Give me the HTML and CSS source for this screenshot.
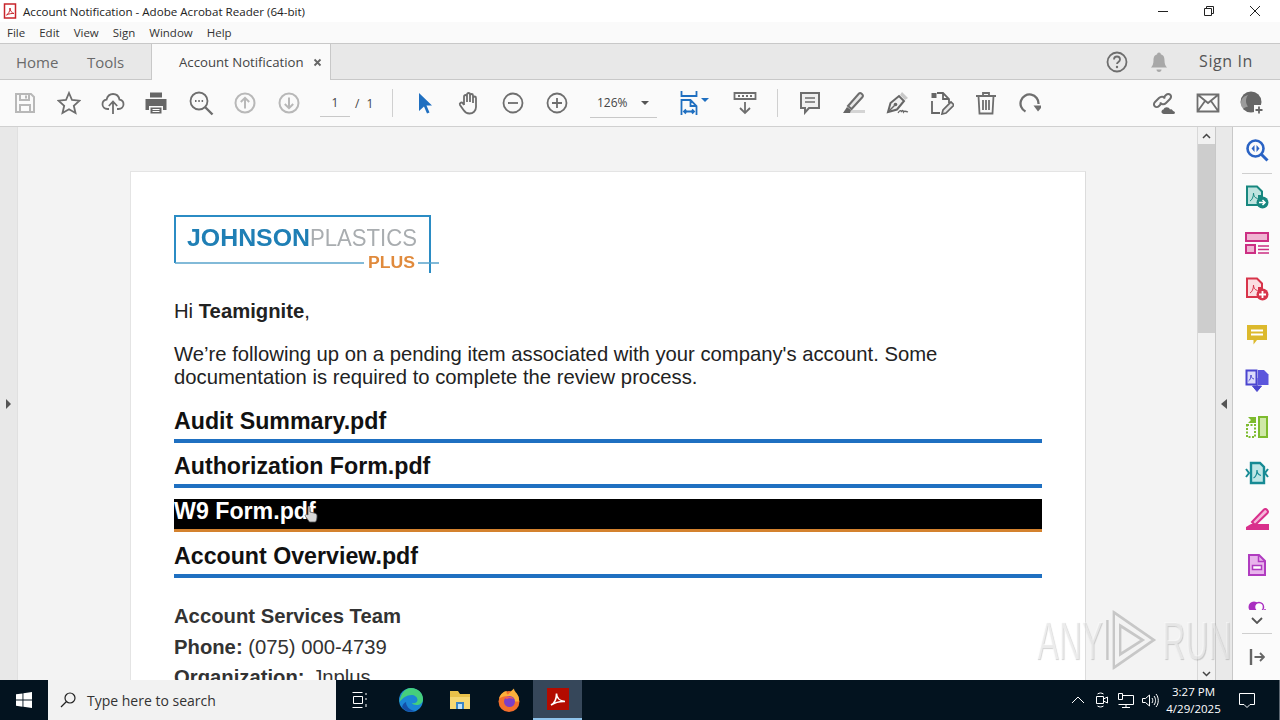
FILE: index.html
```html
<!DOCTYPE html>
<html>

<head>
    <meta charset="utf-8">
    <title>Account Notification - Adobe Acrobat Reader (64-bit)</title>
    <link rel="stylesheet" href="styles.css">
</head>

<body>
    <div class="title-bar">
        <svg class="app-icon" width="14" height="16" viewBox="0 0 14 16"><path d="M1.500 1h11v14h-11z" fill="#fff" stroke="#c8242b" stroke-width="1.500"/><path d="M3.500 12c2-1 3.500-4 3.500-7 0 3 2 5 4 5.500-2.500-.2-5 .3-7.500 1.500z" fill="none" stroke="#c8242b"/></svg>
        <span class="title-text">Account Notification - Adobe Acrobat Reader (64-bit)</span>
        <div class="win-buttons">
            <svg width="12" height="12" viewBox="0 0 12 12"><path d="M1 6.500h10" stroke="#222"/></svg>
            <svg width="12" height="12" viewBox="0 0 12 12"><path d="M1.500 3.500h7v7h-7zM3.500 3.500v-2h7v7h-2" fill="none" stroke="#222"/></svg>
            <svg width="12" height="12" viewBox="0 0 12 12"><path d="M1 1l10 10M11 1l-10 10" stroke="#222"/></svg>
        </div>
    </div>

    <div class="menu-bar">
        <span>File</span><span>Edit</span><span>View</span><span>Sign</span><span>Window</span><span>Help</span>
    </div>

    <div class="tab-bar">
        <span class="nav-tab nav-home">Home</span>
        <span class="nav-tab nav-tools">Tools</span>
        <div class="doc-tab">
            <span>Account Notification</span>
            <svg width="9" height="9" viewBox="0 0 9 9"><path d="M1.500 1.500l6 6M7.500 1.500l-6 6" stroke="#666" stroke-width="1.800"/></svg>
        </div>
        <div class="tab-right">
            <svg width="22" height="22" viewBox="0 0 22 22"><circle cx="11" cy="11" r="9.500" fill="none" stroke="#6e6e6e" stroke-width="1.800"/><path d="M8 8.500c0-4 6-4 6 0 0 2.500-3 2.300-3 4.500" fill="none" stroke="#6e6e6e" stroke-width="1.800"/><circle cx="11" cy="16" r="1.200" fill="#6e6e6e"/></svg>
            <svg class="bell" width="20" height="22" viewBox="0 0 20 22"><path d="M10 1.500c1.200 0 1.800.8 1.800 1.800 3 .8 3.700 3.400 3.700 6.200 0 3.500 1 5.500 2.500 7H2c1.500-1.500 2.500-3.500 2.500-7 0-2.800.7-5.400 3.700-6.200 0-1 .6-1.800 1.800-1.800z" fill="#a8a8a8"/><path d="M7.500 18.500h5c0 1.500-1 2.500-2.500 2.500s-2.500-1-2.500-2.500z" fill="#a8a8a8"/></svg>
            <span class="sign-in">Sign In</span>
        </div>
    </div>

    <div class="toolbar">
        <span class="tool"><svg width="22" height="22" viewBox="0 0 22 22" class="ln pale"><path d="M2 2h15l3 3v15H2zM6 2v6h9V2M12 3.500v3M6 20v-7h10v7"/></svg></span>
        <span class="tool"><svg width="24" height="24" viewBox="0 0 24 24" class="ln"><path d="M12 2l3 7 7.500.7-5.700 5 1.700 7.300-6.500-3.800L5.500 22l1.700-7.300-5.700-5L9 9z"/></svg></span>
        <span class="tool"><svg width="24" height="24" viewBox="0 0 24 24" class="ln"><path d="M8 18H6.500C3.500 18 1.500 16 1.500 13.300c0-2.500 1.800-4.300 4-4.600C6.500 5 9 3 12 3s5.800 2.200 6.500 5.700c2.300.3 4 2.100 4 4.600 0 2.700-2 4.700-5 4.700H16M12 23V11M7.800 15l4.200-4.500 4.200 4.500"/></svg></span>
        <span class="tool tool-print"><svg width="24" height="24" viewBox="0 0 24 24"><path d="M6 1.500h12v5H6zM1.500 8h21v11H19v-4H5v4H1.500zM6.500 16.500h11v6h-11z" fill="#666"/><path d="M8.500 18.500h7M8.500 20.500h7" stroke="#fff"/></svg></span>
        <span class="tool"><svg width="26" height="26" viewBox="0 0 26 26" class="ln"><circle cx="11" cy="11" r="8.500"/><path d="M17 17l7.500 7.500" stroke-width="2.400"/><path d="M7 11h1.500M10.300 11h1.500M13.600 11h1.500"/></svg></span>
        <span class="tool"><svg width="22" height="22" viewBox="0 0 22 22" class="ln pale"><circle cx="11" cy="11" r="9.500"/><path d="M11 16.500V6M6.800 10L11 5.800l4.200 4.200"/></svg></span>
        <span class="tool"><svg width="22" height="22" viewBox="0 0 22 22" class="ln pale"><circle cx="11" cy="11" r="9.500"/><path d="M11 5.500V16M6.800 12l4.200 4.200 4.200-4.200"/></svg></span>
        <div class="page-num"><span class="page-input">1</span><span class="page-total">/ 1</span></div>
        <span class="tool-sep sep-first"></span>
        <span class="tool"><svg width="16" height="22" viewBox="0 0 16 22"><path d="M2 1l13 12.500H9.500l3 7-2.500 1-3-7L2 19z" fill="#1f6fc0"/></svg></span>
        <span class="tool"><svg width="24" height="24" viewBox="0 0 24 24" class="ln"><path d="M7 14V5.500c0-2 3-2 3 0V11M10 10V3.500c0-2 3-2 3 0V11M13 10.500V4.500c0-2 3-2 3 0V12M16 11V7c0-2 3-2 3 0v9c0 4-3 6.500-6.500 6.500-3 0-4.500-1.200-6-3.500L3 14c-1-1.800 1.500-3.300 2.800-1.800L7 14"/></svg></span>
        <span class="tool"><svg width="22" height="22" viewBox="0 0 22 22" class="ln"><circle cx="11" cy="11" r="9.500"/><path d="M6 11h10"/></svg></span>
        <span class="tool"><svg width="22" height="22" viewBox="0 0 22 22" class="ln"><circle cx="11" cy="11" r="9.500"/><path d="M6 11h10M11 6v10"/></svg></span>
        <div class="zoom-box"><span>126%</span><i class="caret"></i></div>
        <span class="tool tool-fit"><svg width="18" height="25" viewBox="0 0 18 25" fill="none" stroke="#1f6fc0" stroke-width="1.800"><path d="M1.500 0v5h15V0M1.500 24V9h9l6 6v9M10.500 9v6h6M4 20.500h10M6 18.500l-2 2 2 2M12 18.500l2 2-2 2"/></svg><i class="caret blue"></i></span>
        <span class="tool"><svg width="24" height="24" viewBox="0 0 24 24" class="ln"><path d="M1.500 2h21v6h-21z"/><path d="M5 5h2M9 5h2M13 5h2M17 5h2" stroke-width="2"/><path d="M12 11v11M7 17l5 5 5-5"/></svg></span>
        <span class="tool-sep sep-second"></span>
        <span class="tool"><svg width="22" height="24" viewBox="0 0 22 24"><path d="M2 2h18v15H10l-4 4.500V17H2z" fill="#f0f0f0" stroke="#6e6e6e" stroke-width="2"/><path d="M6 7h10M6 11h10" stroke="#6e6e6e" stroke-width="1.500"/></svg></span>
        <span class="tool"><svg width="24" height="24" viewBox="0 0 24 24"><path d="M7 22h16v-3H9z" fill="#d4d4d4"/><path d="M1 22h7l1-3-4-3z" fill="#666"/><path d="M6 15L17 2.500c1.500-1.500 5 1.500 3.500 3.500L9.500 18z" fill="#e8e8e8" stroke="#6e6e6e" stroke-width="2"/></svg></span>
        <span class="tool"><svg width="24" height="24" viewBox="0 0 24 24"><path d="M2 21l2.500-9L13 5l5 5-7 8.500z" fill="#f0f0f0" stroke="#666" stroke-width="2"/><path d="M2.500 20.500l6-6" stroke="#666" stroke-width="1.500"/><circle cx="9.500" cy="13.500" r="1.800" fill="#666"/><path d="M14 4l2-3 6 6-3 2z" fill="#c8c8c8"/><path d="M12 22c2-3 3-3 3.500-1 .5-2 1.500-2 2 0 .5-1 2-1 4.500 0" fill="none" stroke="#666" stroke-width="1.300"/></svg></span>
        <span class="tool"><svg width="24" height="24" viewBox="0 0 24 24"><path d="M1.500 2h5v5h-5z" fill="#666"/><path d="M7 2h6l6 6v4M13 2v6h6M2 10v12h8" fill="none" stroke="#666" stroke-width="1.800"/><path d="M12 23l1-4 8-8 3 3-8 8z" fill="#e8e8e8" stroke="#666" stroke-width="1.700"/></svg></span>
        <span class="tool"><svg width="22" height="24" viewBox="0 0 22 24" class="ln"><path d="M1 5h20M8 5V2h6v3M3.500 5l1 17.500h13L18.500 5M8 9v10M11 9v10M14 9v10"/></svg></span>
        <span class="tool"><svg width="22" height="22" viewBox="0 0 22 22"><path d="M6.500 19.500A9 9 0 1 1 19.500 12" fill="none" stroke="#6e6e6e" stroke-width="2.300"/><path d="M14.500 13.500h9.500L19 19.500z" fill="#6e6e6e"/></svg></span>
        <span class="tool tool-push"><svg width="26" height="24" viewBox="0 0 26 24"><path d="M9 14l-3 3c-3 3-7-1-4-4l4-4c2-2 5-1.500 6 .5M10 9l3-3c3-3 7 1 4 4l-4 4c-2 2-5 1.500-6-.5" fill="none" stroke="#6e6e6e" stroke-width="2" transform="translate(2 -2)"/><path d="M13 23c-3 0-3.500-4-.5-4.500 1-3 5.500-3 6.500 0 1-.5 2.500 0 3 1.500 2 0 3 3 .5 3z" fill="#666"/></svg></span>
        <span class="tool"><svg width="24" height="20" viewBox="0 0 24 20" class="ln"><path d="M1.500 1.500h21v17h-21zM1.500 1.500L12 10l10.500-8.500M1.500 18.500L9 8M22.500 18.500L15 8"/></svg></span>
        <span class="tool"><svg width="24" height="24" viewBox="0 0 24 24"><circle cx="11" cy="11" r="10.500" fill="#666"/><path d="M2 19c2-2.500 4-3 6-3.500-1-1-2-3-2-5.500 0-2 .5-4 2-6-4 1-7 3.500-7 8 0 2.500.3 5 1 7z" fill="#fff" opacity=".35"/><path d="M14 14h10v10H14z" fill="#fafafa"/><path d="M19 15.500v7M15.500 19h7" stroke="#666" stroke-width="1.800"/></svg></span>
    </div>

    <div class="workspace">
        <div class="left-strip"><i class="arrow-right"></i></div>

        <div class="doc-area">
            <div class="page">
                <svg class="logo" width="266" height="60" viewBox="0 0 266 60">
                    <path d="M1 48V1h255v57" fill="none" stroke="#2b8cc4" stroke-width="2"/>
                    <path d="M1 48h189M244 48h21" stroke="#5aa4cc" stroke-width="1.500"/>
                    <text x="13" y="31" class="logo-a" textLength="123" lengthAdjust="spacingAndGlyphs">JOHNSON</text>
                    <text x="136" y="31" class="logo-b" textLength="107" lengthAdjust="spacingAndGlyphs">PLASTICS</text>
                    <text x="194" y="53" class="logo-c" textLength="47" lengthAdjust="spacingAndGlyphs">PLUS</text>
                </svg>
                <p class="greeting">Hi <b>Teamignite</b>,</p>
                <p class="intro">We’re following up on a pending item associated with your company's account. Some documentation is required to complete the review process.</p>
                <div class="file-row">Audit Summary.pdf</div>
                <div class="file-row">Authorization Form.pdf</div>
                <div class="file-row file-hover">W9 Form.pdf</div>
                <div class="file-row">Account Overview.pdf</div>
                <div class="contact">
                    <div><b>Account Services Team</b></div>
                    <div><b>Phone:</b> (075) 000-4739</div>
                    <div><b class="org-label">Organization:</b> Jnplus</div>
                </div>
            </div>
            <svg class="cursor" width="14" height="18" viewBox="0 0 14 18"><path d="M4 9V2.500c0-1.500 2-1.500 2 0V7l5 1.200c1.500.4 2 1.200 2 2.800 0 3-.5 4.500-1.500 6H5.500L1.500 11.500C.5 10 2.500 8.500 4 10z" fill="#d8d8d8" stroke="#555" stroke-width=".8"/></svg>
        </div>

        <div class="scrollbar">
            <svg class="scroll-btn" width="9" height="6" viewBox="0 0 9 6"><path d="M1 5l3.500-3.500L8 5" fill="none" stroke="#444" stroke-width="1.500"/></svg>
            <div class="thumb"></div>
            <svg class="scroll-btn scroll-end" width="9" height="6" viewBox="0 0 9 6"><path d="M1 1l3.500 3.500L8 1" fill="none" stroke="#444" stroke-width="1.500"/></svg>
        </div>

        <div class="split-strip"><i class="arrow-left"></i></div>

        <div class="side-panel">
            <span class="side-item"><svg width="24" height="24" viewBox="0 0 24 24"><circle cx="10.500" cy="10.500" r="8" fill="none" stroke="#2a63c4" stroke-width="2.600"/><path d="M16.500 16.500l6 6" stroke="#2a63c4" stroke-width="3"/><path d="M9.500 7l-3 3.500 3 3.500zM11.500 7l3 3.500-3 3.500z" fill="#2a63c4"/></svg></span>
            <span class="side-line"></span>
            <span class="side-item"><svg width="24" height="24" viewBox="0 0 24 24"><path d="M2 1.500h10l5 5V11h-3v9H2z" fill="#bfe3df" stroke="#17877f" stroke-width="2"/><path d="M5 16c2-1 3.500-4 3.500-8 0 3 1.500 5 4 5.500" fill="none" stroke="#17877f"/><circle cx="17.500" cy="17.500" r="6" fill="#17877f"/><path d="M14 17.500h6M17.500 15l2.500 2.500-2.500 2.500" fill="none" stroke="#fff" stroke-width="1.500"/></svg></span>
            <span class="side-item"><svg width="24" height="22" viewBox="0 0 24 22"><path d="M1 1h22v8H1z" fill="#f0b4d2" stroke="#cc2f83" stroke-width="2"/><path d="M1 13h9v8H1z" fill="#f0b4d2" stroke="#cc2f83" stroke-width="2"/><path d="M13 14h11M13 17.500h11M13 21h11" stroke="#cc2f83" stroke-width="1.300"/></svg></span>
            <span class="side-item"><svg width="24" height="24" viewBox="0 0 24 24"><path d="M2 1.500h10l5 5V11h-3v9H2z" fill="#fbdfe2" stroke="#d8344a" stroke-width="2"/><path d="M5 16c2-1 3.500-4 3.500-8 0 3 1.500 5 4 5.500" fill="none" stroke="#d8344a"/><circle cx="17.500" cy="17.500" r="6" fill="#d8344a"/><path d="M14 17.500h7M17.500 14v7" stroke="#fff" stroke-width="1.800"/></svg></span>
            <span class="side-item"><svg width="22" height="22" viewBox="0 0 22 22"><path d="M1 1h20v15H11l-3.500 4.500V16H1z" fill="#dcb92c"/><path d="M5 6.500h12M5 10.500h12" stroke="#fff" stroke-width="1.800"/></svg></span>
            <span class="side-item"><svg width="24" height="24" viewBox="0 0 24 24"><path d="M1.500 1.500h10v14h-10z" fill="#dcdcfa" stroke="#4a45cf" stroke-width="2"/><path d="M13 1h6l4.500 4.500V16H13z" fill="#5b56dc"/><path d="M3.500 12c1.500-1 2.500-3 2.500-6 0 2 1 3.500 3 4" fill="none" stroke="#4a45cf"/><path d="M12 9v9M7.500 17h9L12 22.500z" fill="#4a45cf" stroke="#4a45cf"/></svg></span>
            <span class="side-item"><svg width="22" height="22" viewBox="0 0 22 22"><path d="M13 1h8v20h-8z" fill="#cfe8a8" stroke="#7dbb2e" stroke-width="2"/><path d="M1 9h8v12H1z" fill="none" stroke="#7dbb2e" stroke-width="2" stroke-dasharray="2 1.500"/><path d="M10 1H2l3 3-3 3h8z" fill="#7dbb2e"/></svg></span>
            <span class="side-item"><svg width="24" height="24" viewBox="0 0 24 24"><path d="M6 2h9l4 4v16H6z" fill="#bfe6e6" stroke="#168a94" stroke-width="2.400"/><path d="M8.500 17c2-1 3.500-4 3.500-8 0 3 1.500 5 4 5.500" fill="none" stroke="#168a94" stroke-width="1.200"/><path d="M1 8l3 4-3 4M23 8l-3 4 3 4" fill="none" stroke="#168a94" stroke-width="2"/></svg></span>
            <span class="side-item"><svg width="24" height="22" viewBox="0 0 24 22"><path d="M1 22v-3l5-3h18v6z" fill="#d92f8c"/><path d="M7 14L19 1.500c2-1.500 5 1.500 3.500 3.500L10 17z" fill="#f5b5d8" stroke="#d92f8c" stroke-width="2"/></svg></span>
            <span class="side-item"><svg width="18" height="22" viewBox="0 0 18 22"><path d="M1 1h10l6 6v14H1z" fill="#e8b4ec" stroke="#b03cc0" stroke-width="2"/><path d="M4.500 11.500h9v4h-9z" fill="#fff" stroke="#b03cc0" stroke-width="1.500"/><path d="M10.500 1v6.500H17" fill="none" stroke="#b03cc0" stroke-width="1.500"/></svg></span>
            <span class="side-clip"><svg width="20" height="14" viewBox="0 0 20 14"><circle cx="7" cy="8" r="5.500" fill="#a92fc0"/><circle cx="12" cy="8" r="4.500" fill="#fff" stroke="#a92fc0" stroke-width="1.500"/><circle cx="18" cy="11" r="1" fill="#a92fc0"/></svg></span>
            <span class="side-chev"><svg width="12" height="7" viewBox="0 0 12 7"><path d="M1 1l5 5 5-5" fill="none" stroke="#555" stroke-width="1.800"/></svg></span>
            <span class="side-line"></span>
            <span class="side-item side-last"><svg width="16" height="16" viewBox="0 0 16 16"><path d="M2 0v16" stroke="#666" stroke-width="2.400"/><path d="M5.500 8h9M11 4l4 4-4 4" fill="none" stroke="#666" stroke-width="1.800"/></svg></span>
        </div>

        <div class="watermark"><span>ANY</span><svg width="74" height="44" viewBox="0 0 74 62" preserveAspectRatio="none"><path d="M6 10v42M14 2l50 29-50 29zM22 16l28 15-28 15z" fill="none" stroke="#bdbdbd" stroke-width="3"/></svg><span>RUN</span></div>
    </div>

    <div class="taskbar">
        <span class="start"><svg width="16" height="16" viewBox="0 0 16 16"><path d="M0 2.300l6.500-.9v6.200H0zM7.400 1.300L16 0v7.600H7.400zM0 8.500h6.500v6.200L0 13.800zM7.400 8.500H16V16l-8.600-1.300z" fill="#fff"/></svg></span>
        <div class="search">
            <svg width="16" height="16" viewBox="0 0 16 16"><circle cx="10" cy="6" r="5" fill="none" stroke="#222" stroke-width="1.200"/><path d="M6.500 9.500L1 15" stroke="#222" stroke-width="1.300"/></svg>
            <span>Type here to search</span>
        </div>
        <span class="task task-first"><svg width="16" height="16" viewBox="0 0 16 16" fill="none" stroke="#fff"><path d="M.5 .5h10M.5 15.500h10M1.500 4.500h9v7h-9zM14 1v2M14 6v2M14 12v3" /></svg></span>
        <span class="task"><svg width="24" height="24" viewBox="0 0 24 24"><circle cx="12" cy="12" r="12" fill="#1b87d6"/><path d="M12 0c7 0 12 5 12 11 0 4-3 6-6.500 6-2.500 0-4-1-4.500-2 3 .5 5.500-.5 5.500-3 0-3-3-5-6-5-5 0-9 3-12 7C1.500 6 6 0 12 0z" fill="#45cf7d"/><path d="M7 14c0 4 3 8 9 9-2 1-9 2-13-4 1-3 2-4 4-5z" fill="#1450a8"/></svg></span>
        <span class="task"><svg width="22" height="20" viewBox="0 0 22 20"><path d="M1 1h8l2 3h10v15H1z" fill="#e9c14a"/><path d="M1 7h20v12H1z" fill="#f6d873"/><path d="M7 12h8v7H7z" fill="#3a86c8"/><path d="M9 14h4v5H9z" fill="#bfe0f5"/></svg></span>
        <span class="task"><svg width="24" height="24" viewBox="0 0 24 24"><circle cx="12" cy="13.500" r="10.500" fill="#f36f2c"/><path d="M2 11C3 6 7 3 10 3c-1 1.500-.5 3 1 3.500C13 4 15 2 17 .5c0 3 3 4 4.500 8 .5 2 .5 3 .5 5h-5C14 7 6 7 2 11z" fill="#fbb03b"/><circle cx="12.500" cy="13.500" r="5.500" fill="#7a3fc8"/><path d="M7 10c3-2 7-2 10 1-3-1-6-1-7 0z" fill="#f05a5a"/></svg></span>
        <span class="task task-active"><svg width="22" height="22" viewBox="0 0 22 22"><path d="M0 0h22v22H0z" fill="#b30b00"/><path d="M4 17c3-1.500 5.500-6 5.500-11.500C9.500 10 13 13 18 13.500c-4.500-.3-9.500.7-14 3.500z" fill="none" stroke="#fff" stroke-width="1.600"/></svg></span>
        <div class="tray">
            <span class="tray-icon"><svg width="14" height="8" viewBox="0 0 14 8"><path d="M1 7l6-6 6 6" fill="none" stroke="#fff"/></svg></span>
            <span class="tray-icon"><svg width="14" height="16" viewBox="0 0 14 16" fill="none" stroke="#fff"><path d="M1.500 4.500h7v7h-7zM8.500 7l4-2v6l-4-2M2.500 2c2-1.300 4-1.300 6 0M2.500 14c2 1.300 4 1.300 6 0"/></svg></span>
            <span class="tray-icon"><svg width="16" height="15" viewBox="0 0 16 15" fill="none" stroke="#fff"><path d="M4 2.500h11.500v9H.5M8 11.500v3M4 14.500h8M.5 .5h4v6h-4z"/></svg></span>
            <span class="tray-icon"><svg width="17" height="15" viewBox="0 0 17 15" fill="none" stroke="#fff"><path d="M.5 5.500h3L7.500 2v11l-4-3.500h-3zM10 5c1 1.500 1 3.500 0 5M12 3c2 2.500 2 6.500 0 9M14 1c3 3.500 3 9.500 0 13"/></svg></span>
            <div class="clock"><span>3:27 PM</span><span>4/29/2025</span></div>
            <span class="notify"><svg width="16" height="15" viewBox="0 0 16 15"><path d="M.5 .5h15v11h-4.500L8 14.500 5 11.500H.5z" fill="none" stroke="#fff"/></svg></span>
        </div>
    </div>
</body>

</html>
```
FILE: styles.css
```css
html,
body {
    margin: 0;
    height: 720px;
    overflow: hidden;
    background: #fff;
}

body {
    display: flex;
    flex-direction: column;
    font-family: "Open Sans", "Noto Sans", sans-serif;
    color: #222;
}

svg {
    display: block;
    flex: none;
}

.title-bar {
    height: 22px;
    display: flex;
    align-items: center;
    background: #fff;
    font-size: 11.600px;
}

.app-icon {
    margin: 0 6px 0 3px;
}

.win-buttons {
    margin-left: auto;
    display: flex;
    gap: 34px;
    padding-right: 19px;
}

.menu-bar {
    height: 21px;
    display: flex;
    align-items: center;
    gap: 14px;
    padding-left: 7px;
    background: #fafafa;
    font-size: 11.500px;
    color: #333;
}

.tab-bar {
    height: 37px;
    display: flex;
    align-items: stretch;
    background: #e8e8e8;
    border-top: 1px solid #c8c8c8;
    border-bottom: 1px solid #c8c8c8;
    box-sizing: border-box;
    color: #6a6a6a;
    font-size: 15px;
}

.nav-tab {
    display: flex;
    align-items: center;
}

.nav-home {
    margin-left: 16px;
    width: 71px;
}

.nav-tools {
    width: 64px;
}

.doc-tab {
    width: 180px;
    box-sizing: border-box;
    margin-bottom: -1px;
    padding: 0 8px 0 27px;
    display: flex;
    align-items: center;
    justify-content: space-between;
    background: #fafafa;
    border-left: 1px solid #c8c8c8;
    border-right: 1px solid #c8c8c8;
    color: #444;
    font-size: 13.200px;
}

.tab-right {
    margin-left: auto;
    display: flex;
    align-items: center;
    padding-right: 27px;
}

.bell {
    margin-left: 21px;
}

.sign-in {
    margin-left: 30px;
    margin-bottom: 2px;
    font-size: 16px;
    letter-spacing: .6px;
    color: #555;
}

.toolbar {
    height: 47px;
    box-sizing: border-box;
    display: flex;
    align-items: center;
    padding: 0 6px 0 3px;
    background: #fafafa;
    border-bottom: 1px solid #d0d0d0;
}

.ln {
    fill: none;
    stroke: #6e6e6e;
    stroke-width: 1.800;
}

.ln.pale {
    stroke: #b8b8b8;
    stroke-width: 2;
}

.tool {
    width: 44px;
    height: 30px;
    display: flex;
    align-items: center;
    justify-content: center;
}

.tool-print svg {
    margin-left: -2px;
}

.tool-push {
    margin-left: auto;
}

.tool-fit {
    gap: 3px;
    margin-left: 15px;
    margin-right: 7px;
}

.page-num {
    display: flex;
    align-items: center;
    width: 63px;
    margin-left: 9px;
    font-size: 12px;
    color: #444;
}

.page-input {
    width: 30px;
    box-sizing: border-box;
    padding-bottom: 5px;
    margin-top: 5px;
    text-align: center;
    border-bottom: 1px solid #c8c8c8;
}

.page-total {
    margin-left: 5px;
    word-spacing: 4px;
}

.tool-sep {
    width: 1px;
    height: 28px;
    background: #d0d0d0;
}

.sep-first {
    margin-left: 9px;
    margin-right: 10px;
}

.sep-second {
    margin-left: 10px;
    margin-right: 10px;
}

.zoom-box {
    width: 67px;
    height: 30px;
    box-sizing: border-box;
    margin-left: 11px;
    padding: 0 8px 0 7px;
    display: flex;
    align-items: center;
    justify-content: space-between;
    border-bottom: 1px solid #c8c8c8;
    font-size: 12px;
    color: #444;
}

.caret {
    width: 0;
    height: 0;
    border-left: 4px solid transparent;
    border-right: 4px solid transparent;
    border-top: 4px solid #555;
}

.caret.blue {
    border-top-color: #1f6fc0;
    margin-bottom: 6px;
}

.workspace {
    position: relative;
    height: 553px;
    display: flex;
    overflow: hidden;
}

.left-strip {
    width: 18px;
    box-sizing: border-box;
    flex: none;
    display: flex;
    align-items: center;
    justify-content: center;
    background: #e8e8e8;
    border-right: 1px solid #e0e0e0;
}

.arrow-right {
    width: 0;
    height: 0;
    border-top: 5px solid transparent;
    border-bottom: 5px solid transparent;
    border-left: 5px solid #555;
}

.doc-area {
    position: relative;
    flex: 1;
    padding: 44px 112px 0 112px;
    background: #f3f3f3;
    overflow: hidden;
}

.page {
    width: 868px;
    height: 700px;
    padding: 43px 43px 0 43px;
    background: #fff;
    border: 1px solid #e4e4e4;
    border-right-color: #dcdcdc;
    font-family: "Liberation Sans", Arial, sans-serif;
    font-size: 20.250px;
    line-height: 23px;
    color: #222;
}

.logo {
    margin-bottom: 25px;
    filter: blur(.3px);
}

.logo-a {
    font: bold 23.500px "Liberation Sans", Arial, sans-serif;
    fill: #1f7fb5;
}

.logo-b {
    font: 23.500px "Liberation Sans", Arial, sans-serif;
    fill: #a9adb0;
}

.logo-c {
    font: bold 16px "Liberation Sans", Arial, sans-serif;
    fill: #e08a3c;
}

p {
    margin: 0;
}

.greeting {
    margin-bottom: 20px;
}

.intro {
    width: 800px;
    margin-bottom: 20px;
}

.file-row {
    margin-top: 11px;
    padding-bottom: 6px;
    line-height: 24px;
    font-size: 23.200px;
    font-weight: bold;
    color: #111;
    border-bottom: 4px solid #1f70c1;
}

.file-hover {
    background: #000;
    color: #fff;
    border-bottom: 3px solid #d4822e;
}

.file-hover + .file-row {
    margin-top: 12px;
}

.contact {
    margin-top: 23px;
    line-height: 30.600px;
    color: #333;
}

.org-label {
    margin-right: 2px;
}

.cursor {
    position: absolute;
    left: 286px;
    top: 378px;
}

.scrollbar {
    width: 18px;
    flex: none;
    position: relative;
    background: #f1f1f1;
    border-left: 1px solid #d8d8d8;
    box-sizing: border-box;
}

.scroll-btn {
    margin: 6px auto 5px;
}

.thumb {
    height: 189px;
    background: #cdcdcd;
}

.scroll-end {
    position: absolute;
    left: 4px;
    bottom: 3px;
    margin: 0;
}

.split-strip {
    width: 18px;
    flex: none;
    display: flex;
    align-items: center;
    justify-content: center;
    box-sizing: border-box;
    background: #e9e9e9;
    border-left: 1px solid #c8c8c8;
    border-right: 1px solid #c8c8c8;
}

.arrow-left {
    width: 0;
    height: 0;
    border-top: 5px solid transparent;
    border-bottom: 5px solid transparent;
    border-right: 6px solid #555;
}

.side-panel {
    width: 47px;
    flex: none;
    display: flex;
    flex-direction: column;
    align-items: center;
    background: #fbfbfb;
}

.side-item {
    height: 46px;
    width: 100%;
    flex: none;
    display: flex;
    align-items: center;
    justify-content: center;
}

.side-line {
    width: 30px;
    height: 1px;
    flex: none;
    background: #cfcfcf;
}

.side-clip {
    height: 11px;
    margin-top: 11px;
    overflow: hidden;
    flex: none;
}

.side-chev {
    margin: 7px 0 9px;
    flex: none;
}

.side-last {
    height: 46px;
}

.watermark {
    position: absolute;
    left: 1037px;
    top: 478px;
    height: 70px;
    display: flex;
    align-items: center;
    font-family: "Liberation Sans", Arial, sans-serif;
    font-size: 40px;
    color: rgba(255, 255, 255, .55);
    text-shadow: 1px 1px 1px rgba(0, 0, 0, .22);
    transform: scale(.8, 1.350);
    transform-origin: left center;
    opacity: .8;
}

.taskbar {
    height: 40px;
    flex: none;
    display: flex;
    align-items: stretch;
    background: #03131f;
    color: #fff;
}

.start {
    width: 48px;
    display: flex;
    align-items: center;
    justify-content: center;
}

.search {
    width: 288px;
    box-sizing: border-box;
    padding-left: 12px;
    display: flex;
    align-items: center;
    gap: 11px;
    background: #f2f2f2;
    color: #333;
    font-size: 14px;
}

.task {
    width: 49px;
    display: flex;
    align-items: center;
    justify-content: center;
}

.task-first {
    width: 50px;
    padding-right: 2px;
    box-sizing: border-box;
}

.task-active {
    background: #36475a;
    box-sizing: border-box;
    border-bottom: 2px solid #8fc4ec;
}

.tray {
    margin-left: auto;
    display: flex;
    align-items: center;
    padding-right: 13px;
    border-right: 1px solid #5c6670;
}

.tray-icon {
    width: 24px;
    display: flex;
    justify-content: center;
}

.clock {
    width: 63px;
    display: flex;
    flex-direction: column;
    align-items: center;
    font-size: 11.500px;
    line-height: 17px;
}

.notify {
    margin-left: 14px;
    margin-right: 11px;
}
```
